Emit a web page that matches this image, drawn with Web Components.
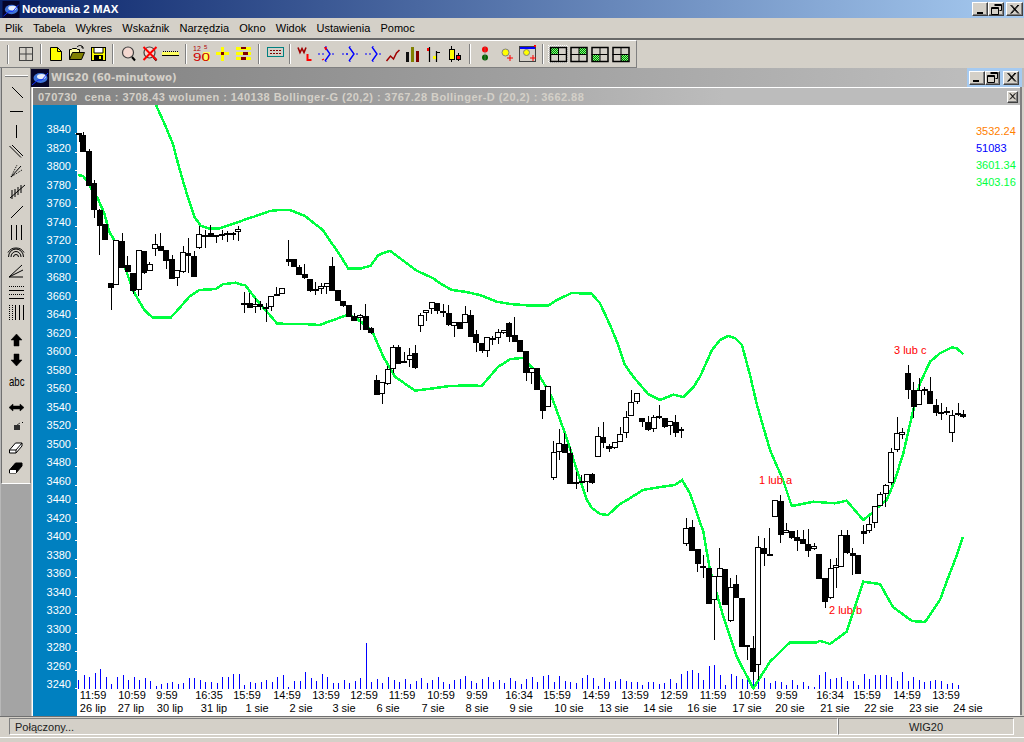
<!DOCTYPE html>
<html lang="pl"><head><meta charset="utf-8"><title>Notowania 2 MAX</title>
<style>html,body{margin:0;padding:0;background:#d4d0c8;font-family:"Liberation Sans",Arial,sans-serif}</style>
</head><body>
<app-frame>
  <title-bar></title-bar>
  <menu-bar></menu-bar>
  <tool-bar></tool-bar>
  <div style="display:flex;height:648px">
    <side-bar></side-bar>
    <chart-window></chart-window>
  </div>
  <status-bar></status-bar>
</app-frame>
<script>
const FF='"Liberation Sans",Arial,sans-serif';
function def(name,html,onInit){customElements.define(name,class extends HTMLElement{constructor(){super();const s=this.attachShadow({mode:'open'});s.innerHTML=typeof html==='function'?html(this):html;}});}
const logo=(s)=>`<svg width="${s}" height="${s}" viewBox="0 0 18 18" style="display:block"><rect width="18" height="18" fill="#05052a"/><ellipse cx="9.5" cy="9" rx="7" ry="5" fill="#3f74d8"/><ellipse cx="10.5" cy="7.5" rx="4.5" ry="2.6" fill="#e8eefa"/><path d="M1 16 7 11 11 11 17 4" stroke="#1030ff" fill="none"/></svg>`;
function glyph(t){
 if(t==='min')return `<svg width="13" height="11" viewBox="0 0 13 11"><rect x="3" y="8" width="6" height="2" fill="#000"/></svg>`;
 if(t==='max')return `<svg width="13" height="11" viewBox="0 0 13 11"><path d="M4.5 .5h7v6h-2M1.500 3.500h7v7h-7zM4.500 1.500h7M1.500 4.500h7" fill="none" stroke="#000"/></svg>`;
 return `<svg width="13" height="11" viewBox="0 0 13 11"><path d="M2.500 1 10 9.500M3.500 1 11 9.500M10 1 2.500 9.500M11 1 3.500 9.500" stroke="#000" fill="none"/></svg>`;
}
def('win-btn',(el)=>`<style>:host{display:flex;align-items:center;justify-content:center;box-sizing:border-box;overflow:hidden;background:#d4d0c8;width:var(--w,16px);height:var(--h,14px);border:1px solid;border-color:#fff #404040 #404040 #fff;box-shadow:inset -1px -1px 0 #808080}svg{flex:none;transform:scale(var(--s,1))}</style>${glyph(el.getAttribute('kind'))}`);
def('title-bar',`<style>:host{display:flex;align-items:center;height:18px;background:linear-gradient(90deg,#0a246a,#a6caf0);color:#fff;font:bold 11.5px ${FF};box-sizing:border-box;padding-left:2px}
.t{margin-left:2px;flex:1}.b{display:flex;margin-right:1px;height:14px}.g{width:2px}</style>${logo(18).replace('height="18"','height="17"')}<span class="t">Notowania 2 MAX</span><div class="b"><win-btn kind="min"></win-btn><win-btn kind="max"></win-btn><div class="g"></div><win-btn kind="close" style="--w:17px"></win-btn></div>`);
def('menu-bar',`<style>:host{display:flex;height:20px;align-items:center;font:11px ${FF};color:#000;padding-left:5px;box-sizing:border-box;background:#d4d0c8;gap:10.2px}</style>
${['Plik','Tabela','Wykres','Wskaźnik','Narzędzia','Okno','Widok','Ustawienia','Pomoc'].map(m=>`<span>${m}</span>`).join('')}`);
const R=(x,y,w,h,c)=>`<rect x="${x}" y="${y}" width="${w}" height="${h}" fill="${c}"/>`;
const P=(d,c='#000',w=1,f='none')=>`<path d="${d}" stroke="${c}" stroke-width="${w}" fill="${f}"/>`;
const fork=(x)=>P(`M${x} 54h2M${x+4} 54h2M${x+14} 54h2`,'#00f')+P(`M${x+7} 47l5 7-5 7`,'#00f',1.400)+P(`M${x+8} 47v-1M${x+8} 62v-1`,'#00f');
const grid=(x,q)=>{const y=47,w=16,h=14;const qx=q%2?x+8.500:x+.5,qy=q>1?y+7.500:y+.5;return R(qx,qy,7.500,6.500,'url(#dith)')+`<rect x="${x+.5}" y="${y+.5}" width="${w}" height="${h}" fill="none" stroke="#000" stroke-width="1.500"/>`+P(`M${x+8.500} ${y}v${h}M${x} ${y+7.500}h${w}`);};
const icons=[
 [3,10,P('M7.500 45v19','#808080')+P('M8.500 45v19','#fff')],
 [13,25,`<rect x="19.500" y="47.500" width="13" height="13" fill="none" stroke="#404040"/>`+P('M26 47v13M19 54h13','#404040')],
 'sep',
 [44,22,P('M50.500 47.500h7l4 4v9h-11z','#000',1,'#ffff00')+P('M57.500 47.500v4h4')],
 [66,22,P('M69.500 59.500v-10h2l1-1h4l1 1h2v3','#000',1,'#ffffa0')+P('M69.500 59.500l3-7h12l-3 7z','#000',1,'#808000')+P('M77 47c2-2 4-2 6 0l-2 0M83 47v2','#000')],
 [88,22,R(91.500,47.500,14,13,'#ffff00')+`<rect x="91.500" y="47.500" width="14" height="13" fill="none" stroke="#000"/>`+R(94,48,9,5,'#fff')+P('M94 48v5h9v-5')+R(94,55,9,5,'#000')+R(99,56,2,3,'#ffff00')],
 'sep',
 [116,23,`<circle cx="128" cy="52.500" r="5.500" fill="#f4d8d0" stroke="#404040" stroke-width="1.200"/>`+P('M132 57l3 3.500','#000',2)],
 [139,21,`<circle cx="149.500" cy="52.500" r="5.500" fill="#f4d8d0" stroke="#404040" stroke-width="1.200"/>`+P('M153.500 57l3 3.500','#000',2)+P('M143.500 47l13 13M156.500 47l-13 13','#f00',2)],
 [160,23,R(162,52,17,3,'#ffff60')+P('M162 55.500h17')+P('M163.500 51v1M165.500 51v1M167.500 51v1M169.500 51v1M171.500 51v1M173.500 51v1M175.500 51v1M177.500 51v1','#000')],
 'sep',
 [189,24,R(203,52,7,9,'#ffff60')+`<text x="193" y="51" font-size="7" fill="#b00000" font-family="Liberation Sans">12</text><text x="204" y="49" font-size="6" fill="#b00000" font-family="Liberation Sans">5</text><text x="193" y="61" font-size="10" textLength="17" lengthAdjust="spacingAndGlyphs" fill="#d00000" font-family="Liberation Sans">90</text>`],
 [213,20,R(216,52,13,3,'#ffff00')+R(221,47,3,14,'#ffff00')+R(221,52,3,3,'#800000')],
 [233,23,R(236,47,15,3,'#ffff00')+R(236,52,15,3,'#ffff00')+R(236,57,15,3,'#ffff00')+R(241,47,5,2,'#800000')+R(243,52,5,3,'#800000')+R(241,57,5,3,'#800000')],
 'sep',
 [262,25,`<rect x="267.500" y="47.500" width="16" height="9" fill="#d4d0c8" stroke="#008080"/>`+P('M270 50.500h2M273 50.500h2M276 50.500h2M279 50.500h2M270 53.500h2M273 53.500h2M276 53.500h2M279 53.500h2','#800000')],
 'sep',
 [293,22,P('M298 47.500l2 5 2-4 2 4 2-5','#a00000',1.600)+P('M307.500 54v6h4','#f00',2)],
 [315,25,fork(318)+P('M326 50l-1-2 2 0M324 59l-2 1','#f00',1.300)],
 [340,23,fork(342)+P('M346 54h2','#00f')],
 [363,21,fork(365)],
 [384,19,P('M386.500 61l4-5 3 3 3-6 3-3','#a00000',1.500)],
 [403,21,R(406,52,3,10,'#101010')+R(411,47,3,15,'#808000')+R(416,51,3,11,'#800000')],
 [424,21,P('M429.500 47v15M436.500 51v11','#000',1.200)+R(427,48,2,3,'#f00')+R(437,52,3,1,'#000')+R(433,56,3,3,'#ffff00')],
 [445,22,P('M451.500 46v16')+`<rect x="449.500" y="49.500" width="5" height="10" fill="#ffff00" stroke="#000"/>`+P('M458.500 53v8')+R(456,55,5,4,'#f00')+`<rect x="456.500" y="55.500" width="4" height="4" fill="none" stroke="#000"/>`],
 'sep',
 [473,22,`<circle cx="485" cy="49.500" r="3" fill="#f00"/><circle cx="485" cy="57.500" r="3" fill="#006400"/>`+P('M485 46v15','#808080',.6)],
 [495,21,`<circle cx="505.500" cy="52.500" r="3.500" fill="#ffff00" stroke="#808080"/>`+P('M507 58h6M510 55v6','#f00')],
 [516,24,`<rect x="519.500" y="46.500" width="16" height="15" fill="#d4d0c8" stroke="#404040"/>`+R(520,47,15,2,'#0000ff')+R(534,45,2,2,'#f00')+`<circle cx="526.500" cy="52.500" r="3" fill="#ffff00" stroke="#808080"/>`+P('M530 58h6M533 55v6','#f00')],
 'sep',
 [546,23,R(548,45,20,18,'url(#dw)')+R(551,48,15,13,'#d4d0c8')+grid(550,0)],
 [569,20,grid(570.500,1)],
 [589,21,grid(591.500,2)],
 [610,22,grid(612.500,3)],
];
const sepX=[38,110,183,256,287,467,540];
let si=0;
const tb=icons.map(it=>{
 if(it==='sep'){const x=sepX[si++];return `<svg width="6" height="24" viewBox="${x} 43 6 24">${P(`M${x+2.500} 44v20`,'#808080')+P(`M${x+3.500} 44v20`,'#fff')}</svg>`;}
 return `<svg width="${it[1]}" height="24" viewBox="${it[0]} 43 ${it[1]} 24">${it[2]}</svg>`;}).join('');
def('tool-bar',`<style>:host{display:block;height:30px;box-sizing:border-box;border-top:2px solid #686868;background:#d4d0c8}
.in{box-sizing:border-box;width:637px;height:28px;padding-left:3px;padding-top:2px;display:flex;align-items:flex-start;border-top:1px solid #fff;border-bottom:1px solid #808080;border-right:1px solid #808080}svg{display:block;flex:none}.d{position:absolute;width:0;height:0}</style>
<svg class="d" width="0" height="0"><defs><pattern id="dith" width="2" height="2" patternUnits="userSpaceOnUse"><rect width="2" height="2" fill="#008000"/><rect width="1" height="1" fill="#80ff80"/><rect x="1" y="1" width="1" height="1" fill="#80ff80"/></pattern><pattern id="dw" width="2" height="2" patternUnits="userSpaceOnUse"><rect width="2" height="2" fill="#fff"/><rect width="1" height="1" fill="#d4d0c8"/><rect x="1" y="1" width="1" height="1" fill="#d4d0c8"/></pattern></defs></svg>
<div class="in">${tb}</div>`);
const dash='stroke-dasharray="1 1"';
const side=[
 [70,10,P('M5 76.500h23','#808080')+P('M5 75.500h23','#fff')],
 [80,21,P('M12 87l11 11')],
 [101,20,P('M10 111.500h13')],
 [121,20,P('M16.500 125v13')],
 [141,20,P('M9.500 146l11.500 11.500M12 145l11 11')],
 [161,20,P('M11 177l10-11')+`<path d="M11 177l11-7M11 177l6-12" stroke="#000" fill="none" ${dash}/>`],
 [181,21,P('M10 198l15-13')+P('M12 190v9M15 189v8M18 187v8M21 185v8')],
 [202,20,P('M11 218l12-12')],
 [222,20,P('M11.500 225v15M16.500 225v15M21.500 225v15')],
 [242,20,P('M8.500 257a7.500 8 0 0 1 15 0M11 257a5 5.500 0 0 1 10 0M13.500 257a2.500 2.500 0 0 1 5 0M8 252.500c2-3 4-4.500 8-4.500s6 1.500 8 4.500')],
 [262,19,P('M9 277l13-12M9 277l14-7M9 277h14')],
 [281,20,`<path d="M9 286.500h15M9 294.500h15" stroke="#000" ${dash}/>`+P('M9 290.500h15M9 298.500h15')],
 [301,24,`<path d="M9.500 305v15M12.500 305v15" stroke="#000" ${dash}/>`+P('M15.500 305v15M19.500 305v15M23.500 305v15')],
 [325,25,P('M16.500 334l5.500 6h-3v6h-5v-6h-3z','#000',.5,'#000')],
 [350,20,P('M14 354h5v6h3l-5.500 6-5.500-6h3z','#000',.5,'#000')],
 [370,25,`<text x="9" y="386" font-family="Liberation Sans" font-size="13" textLength="15.500" lengthAdjust="spacingAndGlyphs" fill="#000">abc</text>`],
 [395,21,P('M9 407.500l4-3.500v2h7v-2l4 3.500-4 3.500v-2h-7v2z','#000',.5,'#000')],
 [416,21,R(14,425,6,5,'#303030')+P('M17 425l3-2','#404040')+R(22,422,1,1,'#000')],
 [437,20,P('M9.500 450l6-7h6.500l0 3-6 7h-6.500z','#000',1,'#fff')+P('M9.500 450h6.500l6-7M16 450v3')],
 [457,21,P('M9.500 470l6-7h6.500l0 3-6 7h-6.500z','#000',1,'#000')+R(10,470,6,3,'#fff')],
];
def('side-bar',`<style>:host{display:block;flex:none;width:31px;height:100%;box-sizing:border-box;background:#a4a4a4;border-left:1px solid #b8b8b8;position:relative}
.a{width:100%;height:416px;margin-top:0;box-sizing:border-box;background:#d4d0c8;border-left:1px solid #707070;border-right:1px solid #808080;border-bottom:1px solid #fff;padding-top:2px;display:flex;flex-direction:column;overflow:hidden}svg{display:block;flex:none;margin-left:1px}</style>
<div class="a">${side.map(s=>`<svg width="27" height="${s[1]}" viewBox="3 ${s[0]} 27 ${s[1]}">${s[2]}</svg>`).join('')}</div>`);
// ---------- chart data
const seg=(ox,oy,a)=>a.map(c=>[ox+c[0]/3,oy+c[1]/3,oy+c[2]/3,oy+c[3]/3,oy+c[4]/3,c[5]]);
const candles=[
...seg(76,100,[[9,100,128,100,103,1],[21,97,155,105,155,1],[38,148,260,154,260,1],[54,240,355,250,332,1],[70,328,465,330,378,1],[87,372,420,372,420,1],[104,548,630,550,564,1],[120,421,557,421,557,0],[137,400,505,423,503,1],[154,468,515,495,515,1],[171,518,582,518,573,1],[187,451,588,451,572,0],[204,453,522,453,518,1],[220,487,515,493,515,0],[237,403,470,433,449,0],[253,400,452,438,452,1],[270,451,507,451,485,1],[287,466,537,477,537,1],[303,511,558,511,536,0],[320,438,520,457,517,0],[336,415,520,460,468,1],[353,453,530,468,530,1],[369,378,446,403,446,0],[386,390,445,405,410,1],[403,376,413,400,413,1],[420,405,428,405,410,1],[437,390,420,403,407,1],[453,392,425,400,404,1],[470,395,418,400,404,1],[486,378,422,388,397,0]]),
...seg(240,230,[[12,185,248,219,221,1],[28,188,233,219,233,1],[44,205,250,221,229,0],[60,213,240,222,230,1],[77,218,275,231,235,1],[93,199,245,199,233,0],[109,172,200,193,200,0],[126,175,193,175,193,0],[145,30,108,87,95,1],[160,88,113,88,113,1],[177,105,135,111,135,1],[193,102,146,133,146,1],[210,147,185,147,183,1],[226,156,194,178,182,1],[243,160,192,169,178,0],[259,160,192,160,172,0],[276,82,182,108,182,1],[292,181,215,181,215,1],[309,213,232,213,228,1],[325,225,262,225,260,1],[342,250,273,258,273,1],[359,253,302,256,265,0],[376,222,300,258,300,1],[392,290,310,294,308,1],[409,435,495,451,495,1],[426,455,521,455,491,0],[442,408,464,418,464,0],[458,345,430,352,418,0],[474,345,402,352,402,1],[492,366,398,392,396,1],[508,355,412,376,392,0],[524,345,416,370,416,1]]),
...seg(410,290,[[31,68,125,76,110,0],[47,61,95,61,71,0],[64,37,72,37,59,0],[80,40,72,40,65,1],[98,42,80,64,71,1],[115,45,107,70,107,1],[132,95,140,95,106,0],[148,97,119,97,119,1],[165,48,100,73,100,0],[181,60,140,75,140,1],[198,120,185,133,161,1],[215,160,190,160,185,1],[231,142,203,142,185,0],[247,138,165,145,149,1],[264,118,162,127,146,0],[280,121,133,121,131,0],[297,95,155,99,140,1],[313,82,158,136,158,1],[330,151,186,151,186,1],[347,183,272,183,250,1],[364,233,282,233,247,0],[380,235,300,235,300,1],[397,300,386,300,362,1],[414,289,352,289,352,0],[430,453,570,487,566,0],[447,418,512,460,488,0],[463,430,490,462,490,1],[480,472,584,490,584,1],[497,545,597,577,583,0],[514,555,578,574,578,1],[530,553,608,553,577,0],[546,548,581,553,581,1],[563,412,502,439,502,0],[578,397,476,441,458,1],[597,462,485,469,479,1],[613,456,477,456,475,0],[630,412,457,433,457,0],[647,363,443,382,430,0],[663,300,379,337,379,0],[680,310,342,310,337,0],[696,385,413,385,398,1],[713,378,422,397,422,1],[730,375,425,380,415,0],[747,345,388,379,385,0],[763,385,415,385,413,1],[780,394,437,394,409,0],[796,376,443,397,431,1],[813,410,443,418,424,0]]),
...seg(670,480,[[47,113,197,145,193,0],[65,120,212,141,212,1],[82,208,277,208,254,1],[98,225,293,258,263,1],[115,263,371,263,371,1],[132,287,480,287,358,0],[148,205,290,263,290,0],[165,267,374,267,374,1],[181,295,428,322,425,0],[197,285,355,313,355,1],[214,353,499,353,499,1],[231,496,540,496,499,1],[248,468,600,505,576,1],[264,168,600,202,556,0],[281,175,258,205,223,1],[298,145,228,223,226,1],[315,61,113,61,113,0],[331,45,190,63,164,1],[348,130,160,151,160,0],[364,153,176,153,174,1],[381,150,213,171,182,1],[398,150,193,178,193,1],[414,148,233,192,212,1],[431,190,210,199,207,0],[447,222,297,222,297,1],[464,295,385,295,368,1],[481,237,356,265,356,0],[497,235,325,256,264,0],[513,150,262,166,262,0],[530,150,221,166,221,1],[547,205,287,220,230,1],[564,226,284,226,284,1]]),
...seg(840,340,[[70,556,613,573,581,1],[87,530,578,553,574,0],[103,499,565,499,550,0],[120,457,499,463,499,0],[136,433,503,436,463,0],[153,325,435,337,431,0],[170,232,338,280,331,0],[186,265,298,277,285,0],[203,75,177,99,151,1],[220,127,236,149,199,1],[236,115,195,149,193,0],[253,140,165,146,147,1],[270,112,191,153,191,1],[287,178,228,195,218,1],[303,190,242,217,224,1],[319,200,225,214,220,0],[336,210,305,226,281,0],[353,190,228,220,224,1],[369,210,233,223,233,1]])
];
const pts=(ox,oy,a)=>a.map(p=>[ox+p[0]/3,oy+p[1]/3]);
const upper=[...pts(76,100,[[240,15],[265,70],[290,130],[310,205],[335,290],[355,350],[375,378],[400,386],[430,385],[470,372],[510,358],[540,348]]),[270,211],[280,210],[290,210],[305,216],
...pts(240,230,[[248,0],[272,35],[300,75],[325,116],[360,116],[392,107],[415,75],[450,62],[480,85],[530,122],[580,145],[600,160]]),
...pts(410,290,[[125,0],[165,5],[210,15],[260,35],[300,42],[365,47],[415,47],[440,30],[485,9],[545,11],[570,40],[600,105],[625,165],[645,225],[670,260],[715,313],[750,330],[790,314],[820,321],[850,292],[870,260]]),
[712,350],[720,340],[728,336],[735,338],[742,345],[750,375],[757,405],[770,450],[783,480],
...pts(670,480,[[365,78],[430,65],[470,68],[495,70],[530,62],[580,120],[605,100]]),
...pts(840,340,[[110,505],[140,480],[165,420],[190,340],[215,230],[240,130],[270,65],[300,40],[335,22],[350,25],[370,42]])];
const lower=[[78,175],[83,176],[88,182],[92,190],
...pts(76,100,[[65,295],[85,340],[100,395],[120,430],[150,510],[170,570],[205,630],[230,653],[285,652],[310,625],[340,590],[370,570],[420,567],[440,553],[480,548],[500,555]]),
...pts(240,230,[[15,165],[50,210],[85,250],[112,281],[190,282],[240,285],[265,275],[320,256],[345,262],[395,300],[430,380],[465,440],[525,482]]),
...pts(410,290,[[70,295],[120,288],[185,286],[215,288],[265,230],[300,208],[340,203],[390,260],[425,320],[465,430],[530,630]]),
[592,508],[600,514],[608,515],[620,504],[627,500],[643,490],[660,487],[675,485],[682,480],
...pts(670,480,[[60,40],[100,155],[120,270],[160,410],[200,530],[250,625],[300,545],[360,487],[440,487],[450,482],[480,492],[530,455],[580,305],[630,312]]),
[893,607],[912,621],[925,622],[940,600],[948,578],[955,560],[963,537]];
const vol=[9,14,12,16,20,12,5,12,14,9,12,9,11,8,3,5,6,7,5,6,11,11,9,7,7,6,12,12,15,15,4,7,6,7,9,7,12,14,2,8,8,17,11,8,15,12,6,6,
9,6,8,11,46,7,10,6,12,9,7,10,5,8,11,6,9,12,7,5,9,10,13,8,6,10,12,7,9,6,11,8,5,10,12,7,
13,14,7,13,8,7,6,11,14,11,3,11,7,8,10,8,7,7,4,7,7,5,6,10,6,15,18,19,16,9,23,24,14,4,15,13,10,12,23,16,11,6,8,7,4,9,4,7,3,2,14,17,10,11,12,8,8,4,15,10,14,14,14,12,8,17,8,12,9,7,8,9,8,5,6,4];
let g='';
g+=R(33,105,44,611,'#0080c0');
for(let i=0;i<=30;i++){const y=Math.round(688-i*18.5);g+=R(75,y,2,1,'#fff');
 g+=`<text x="71" y="${y}" text-anchor="end" fill="#fff" class="t">${3240+i*20}</text>`;}
vol.slice(0,161).forEach((h,i)=>{const x=Math.round(78.3+i*5.53);g+=R(x,689-h,1,h,'#0000ff');});
const line=a=>`<polyline points="${a.map(p=>p[0].toFixed(1)+','+p[1].toFixed(1)).join(' ')}" fill="none" stroke="#00ff40" stroke-width="2.5"/>`;
g+=line(upper)+line(lower);
candles.forEach(c=>{const [x,wt,wb,bt,bb,f]=c;const rx=Math.round(x);
 g+=R(rx,Math.round(wt),1,Math.max(1,Math.round(wb-wt)),'#000');
 const l=Math.round(x-2.6),w=f?5:6,t=Math.round(bt),h=Math.max(2,Math.round(bb-bt));
 if(f)g+=R(l,t,w+1,h,'#000');
 else g+=`<rect x="${l+.5}" y="${t+.5}" width="${w-1}" height="${Math.max(1,h-1)}" fill="#fff" stroke="#000"/>`;
});
const times=[['11:59',93],['10:59',132],['9:59',167],['16:35',209],['15:59',247],['14:59',287],['13:59',326],['12:59',364],['11:59',402],['10:59',441],['9:59',477],['16:34',519],['15:59',557],['14:59',596],['13:59',635],['12:59',674],['11:59',713],['10:59',752],['9:59',787],['16:34',830],['15:59',867],['14:59',907],['13:59',946]];
const dates=[['26 lip',93],['27 lip',131],['30 lip',170],['31 lip',214],['1 sie',257],['2 sie',301],['3 sie',344],['6 sie',388],['7 sie',433],['8 sie',477],['9 sie',521],['10 sie',569],['13 sie',614],['14 sie',658],['16 sie',702],['17 sie',747],['20 sie',790],['21 sie',835],['22 sie',879],['23 sie',924],['24 sie',968]];
times.forEach(t=>g+=`<text x="${t[1]}" y="699" text-anchor="middle" class="t">${t[0]}</text>`);
dates.forEach(t=>g+=`<text x="${t[1]}" y="712" text-anchor="middle" class="t">${t[0]}</text>`);
[['3532.24','#ff8000',135],['51083','#0000ff',152],['3601.34','#00ff40',169],['3403.16','#00ff40',186]].forEach(l=>g+=`<text x="976" y="${l[2]}" fill="${l[1]}" class="t">${l[0]}</text>`);
[['1 lub a',759,484],['2 lub b',829,614],['3 lub c',894,354]].forEach(l=>g+=`<text x="${l[1]}" y="${l[2]}" fill="#f00" class="t">${l[0]}</text>`);
def('chart-plot',`<style>:host{display:block;width:987px;height:611px;background:#fff}svg{display:block;shape-rendering:crispEdges}.t{font:11px ${FF}}</style><svg width="987" height="611" viewBox="33 105 987 611">${g}</svg>`);
def('chart-window',`<style>:host{display:block;flex:1;min-width:0;height:100%;background:#d4d0c8}
.tb{height:19px;display:flex;align-items:center;background:linear-gradient(90deg,#808080,#bdbdbd 95%);color:#d4d0c8;font:bold 10.2px "DejaVu Sans",sans-serif}
.tb span{margin-left:2px;flex:1}.bt{display:flex;align-items:center;height:19px;background:#a6caf0;padding:0 3px 0 2px;width:50px;justify-content:flex-start;margin-right:2px}.gp{width:3px;flex:none}
.body{box-sizing:border-box;margin-left:1px;border-left:1px solid #fff;border-top:1px solid #fff;height:629px;display:flex;flex-direction:column;width:988px}
.cap{height:17px;display:flex;align-items:center;box-sizing:border-box;padding-left:5px;background:linear-gradient(90deg,#808080,#bcbcbc 70%);color:#d4d0c8;font:bold 11px ${FF};letter-spacing:.45px;white-space:pre;flex:none}
.cap span{flex:1}.cap win-btn{margin-right:2px}
.wrap{display:flex;width:992px}.rb{width:2px;background:#808080;flex:none;height:628px}
.bot{height:1px;background:#808080;flex:none}</style>
<div class="tb">${logo(18)}<span>WIG20 (60-minutowo)</span><div class="bt"><win-btn kind="min"></win-btn><win-btn kind="max"></win-btn><div class="gp"></div><win-btn kind="close"></win-btn></div></div>
<div class="wrap"><div class="body"><div class="cap"><span>070730  cena : 3708.43 wolumen : 140138 Bollinger-G (20,2) : 3767.28 Bollinger-D (20,2) : 3662.88</span><win-btn kind="close" style="--w:11px;--h:12px;--s:.7"></win-btn></div><chart-plot></chart-plot></div><div class="rb"></div></div>`);
def('status-bar',`<style>:host{display:block;height:26px;box-sizing:border-box;border-top:1px solid #707070;padding:1px 0 0 9px;background:#d4d0c8;font:11px ${FF};color:#202020}
.r{display:flex;height:17px;width:1005px}.p{box-sizing:border-box;border:1px solid;border-color:#808080 #fff #fff #808080;display:flex;align-items:center}
.a{width:829px;padding-left:5px}.b{flex:1;justify-content:center}.l{height:1px;background:#fff;margin:2px 0 0 -9px}</style>
<div class="r"><div class="p a">Połączony...</div><div class="p b">WIG20</div></div><div class="l"></div>`);
def('app-frame',`<style>:host{display:flex;flex-direction:column;width:1024px;height:742px;overflow:hidden;background:#d4d0c8}</style><slot></slot>`);
</script>
</body></html>
